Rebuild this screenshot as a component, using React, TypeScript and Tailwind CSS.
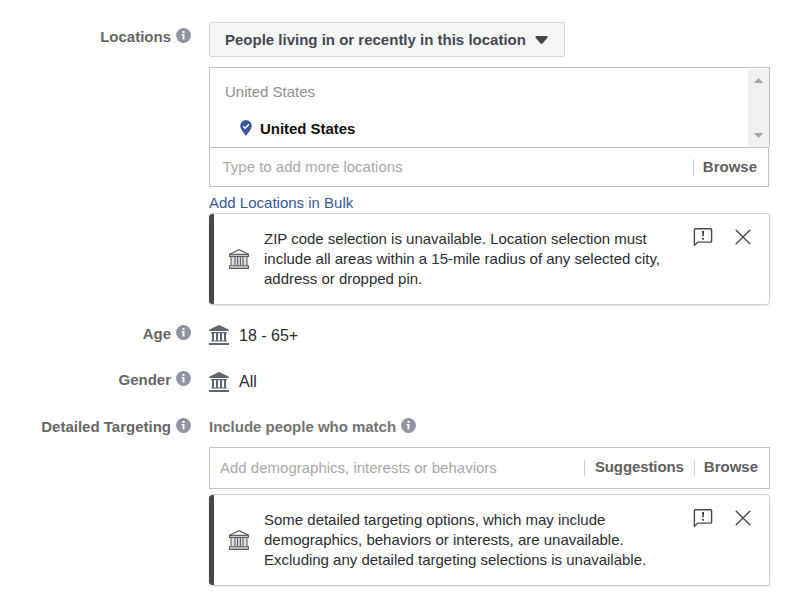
import type { ReactNode } from "react";

function InfoIcon() {
  return (
    <svg viewBox="0 0 15 15" className="h-[15px] w-[15px] shrink-0">
      <circle cx="7.5" cy="7.5" r="7.4" fill="#8d93a0" />
      <path d="M6.5 3.1h2v1.9h-2zM5.6 6.1h2.9v5.5H6.5V7.2h-.9z" fill="#fff" />
    </svg>
  );
}

function BankSolid() {
  return (
    <svg viewBox="0 0 20 20" className="h-5 w-5 shrink-0" fill="#5f6673">
      <path d="M10 0L19.6 4.4V6H.4V4.4zM2 7h16v1.2H2zM3 8h2v7.7H3zM7 8h2v7.7H7zM11 8h2v7.7h-2zM15 8h2v7.7h-2zM2 15.4h16v1.1H2zM0 18h20v2H0z" />
    </svg>
  );
}

function BankOutline() {
  return (
    <svg viewBox="0 0 20 20" className="h-5 w-5 shrink-0" fill="none" stroke="#5a5f67" strokeWidth="1.1">
      <path d="M.6 5.2L10 .7l9.4 4.5v2.3H.6z" fill="#fff" />
      <path d="M.6 5.4h18.8v2.1H.6z" fill="#c9cbcf" />
      <path d="M2 8h16v8.5H2z" fill="#dcdee0" stroke="none" />
      <path d="M2 7.8v8.7M6 7.8v8.7M8.6 7.8v8.7M11.4 7.8v8.7M14 7.8v8.7M18 7.8v8.7" />
      <path d="M.6 16.7h18.8v2.7H.6z" fill="#d5d7da" />
    </svg>
  );
}

function FeedbackIcon() {
  return (
    <svg viewBox="0 0 20 20" className="h-5 w-5" fill="none" stroke="#444950" strokeWidth="1.4" strokeLinejoin="round">
      <path d="M2.2 1.7h15.2q1.2 0 1.2 1.2v11q0 1.2-1.2 1.2H5l-3.6 3.2V2.5q0-.8.8-.8z" />
      <path d="M9.1 4h2l-.4 5.6H9.5zM9.2 11h1.7v1.7H9.2z" fill="#343940" stroke="none" />
    </svg>
  );
}

function CloseIcon() {
  return (
    <svg viewBox="0 0 16 16" className="h-4 w-4" fill="none" stroke="#444950" strokeWidth="1.4" strokeLinecap="round">
      <path d="M1.2 1.2l13.6 13.6M14.8 1.2L1.2 14.8" />
    </svg>
  );
}

function Row({ label, className, children }: { label: string; className: string; children: ReactNode }) {
  return (
    <div className={`flex gap-[18px] ${className}`}>
      <div className="flex h-[18px] w-[191px] shrink-0 items-start justify-end gap-[5px] font-bold text-[#666]">
        <span>{label}</span>
        <InfoIcon />
      </div>
      {children}
    </div>
  );
}

function Notice({ lines }: { lines: string[] }) {
  return (
    <div className="flex h-[92px] w-[561px] overflow-hidden rounded-[4px] border border-[#ccd0d5] border-l-0 shadow-[0_1px_2px_rgba(0,0,0,0.1)]">
      <div className="-my-px w-[5px] shrink-0 bg-[#444950]" />
      <div className="flex w-[50px] shrink-0 items-center pl-[15px]">
        <BankOutline />
      </div>
      <div className="grow pt-[15px] leading-5 tracking-[-0.01px] whitespace-nowrap text-[#2b2d31]">
        {lines.map((line) => (
          <div key={line}>{line}</div>
        ))}
      </div>
      <div className="flex items-start gap-[22px] pt-[13px] pr-[18px]">
        <FeedbackIcon />
        <div className="pt-[2px]">
          <CloseIcon />
        </div>
      </div>
    </div>
  );
}

export default function App() {
  return (
    <main className="h-[610px] w-[790px] overflow-hidden bg-white pt-[22px] font-['Liberation_Sans',Arial,sans-serif] text-[15px] leading-[18px]">
      <Row label="Locations" className="h-[305px] [&>div:first-child]:mt-[6px]">
        <div className="w-[561px]">
          <button className="flex h-[35px] w-[356px] items-center gap-[9px] rounded-[2px] border border-[#d5d8dd] bg-[#f5f6f7] pl-[15px] font-bold whitespace-nowrap text-[#444950]">
            <span>People living in or recently in this location</span>
            <svg viewBox="0 0 13 8" className="h-2 w-[13px]" fill="#444950">
              <path d="M1.3 0h10.4q.8 0 .8.8v1L7.5 7.4q-1 .8-2 0L.5 1.8v-1q0-.8.8-.8z" />
            </svg>
          </button>
          <div className="mt-[10px] flex h-20 justify-between border border-b-0 border-[#c0c2c6]">
            <div className="pt-[15px] pl-[15px]">
              <div className="text-[#909090]">United States</div>
              <div className="mt-[19px] flex items-center gap-2 pl-[15px] font-bold tracking-[-0.04px] text-[#111]">
                <svg viewBox="0 0 12 16" className="-mt-[2px] h-4 w-3">
                  <path d="M6 0a5.8 5.8 0 0 1 5.8 5.8C11.8 9 8 13 6 16 4 13 .2 9 .2 5.8A5.8 5.8 0 0 1 6 0z" fill="#3b5998" />
                  <path d="M3.2 6.2l2 2 3.7-4" fill="none" stroke="#fff" strokeWidth="1.4" />
                </svg>
                <span>United States</span>
              </div>
            </div>
            <div className="mt-px flex w-[21px] flex-col items-center justify-between bg-[#f0f0f0] py-[9px]">
              <svg viewBox="0 0 9 5" className="h-[5px] w-[9px]" fill="#a3a3a3">
                <path d="M0 5L4.5 0 9 5z" />
              </svg>
              <svg viewBox="0 0 9 5" className="h-[5px] w-[9px]" fill="#a3a3a3">
                <path d="M0 0L4.5 5 9 0z" />
              </svg>
            </div>
          </div>
          <div className="flex h-10 w-[560px] items-center border border-[#bdc3cf] pr-[11px] pl-[12.5px]">
            <span className="grow text-[#a9a9a9]">Type to add more locations</span>
            <span className="h-[17px] border-l border-[#ccd0d5]" />
            <span className="pl-[9px] font-bold text-[#606060]">Browse</span>
          </div>
          <div className="mt-[7px] h-[19px] text-[#385898]">Add Locations in Bulk</div>
          <Notice
            lines={[
              "ZIP code selection is unavailable. Location selection must",
              "include all areas within a 15-mile radius of any selected city,",
              "address or dropped pin.",
            ]}
          />
        </div>
      </Row>
      <Row label="Age" className="h-[46px] [&>div:first-child]:-mt-[2px]">
        <div className="-mt-[2px] flex h-5 items-center gap-[10px] text-base leading-[18px] text-[#2b2d31]">
          <BankSolid />
          <span className="pt-[2px]">18 - 65+</span>
        </div>
      </Row>
      <Row label="Gender" className="h-[46px] [&>div:first-child]:-mt-[2px]">
        <div className="-mt-px flex h-5 items-center gap-[10px] text-base leading-[18px] text-[#2b2d31]">
          <BankSolid />
          <span className="-mt-px">All</span>
        </div>
      </Row>
      <Row label="Detailed Targeting" className="[&>div:first-child]:-mt-px">
        <div className="w-[561px]">
          <div className="-mt-px flex h-[29px] items-start gap-[5px] font-bold tracking-[-0.02px] text-[#737373]">
            <span>Include people who match</span>
            <InfoIcon />
          </div>
          <div className="mb-[5px] flex h-[42px] items-center border border-[#bdc3cf] pr-[11px] pl-[10px]">
            <span className="grow text-[#a9a9a9]">Add demographics, interests or behaviors</span>
            <span className="h-4 border-l border-[#ccd0d5]" />
            <span className="-mt-[2px] pr-[10px] pl-[10px] font-bold tracking-[-0.1px] text-[#606060]">Suggestions</span>
            <span className="h-4 border-l border-[#ccd0d5]" />
            <span className="-mt-[2px] pl-[9px] font-bold text-[#606060]">Browse</span>
          </div>
          <Notice
            lines={[
              "Some detailed targeting options, which may include",
              "demographics, behaviors or interests, are unavailable.",
              "Excluding any detailed targeting selections is unavailable.",
            ]}
          />
        </div>
      </Row>
    </main>
  );
}
